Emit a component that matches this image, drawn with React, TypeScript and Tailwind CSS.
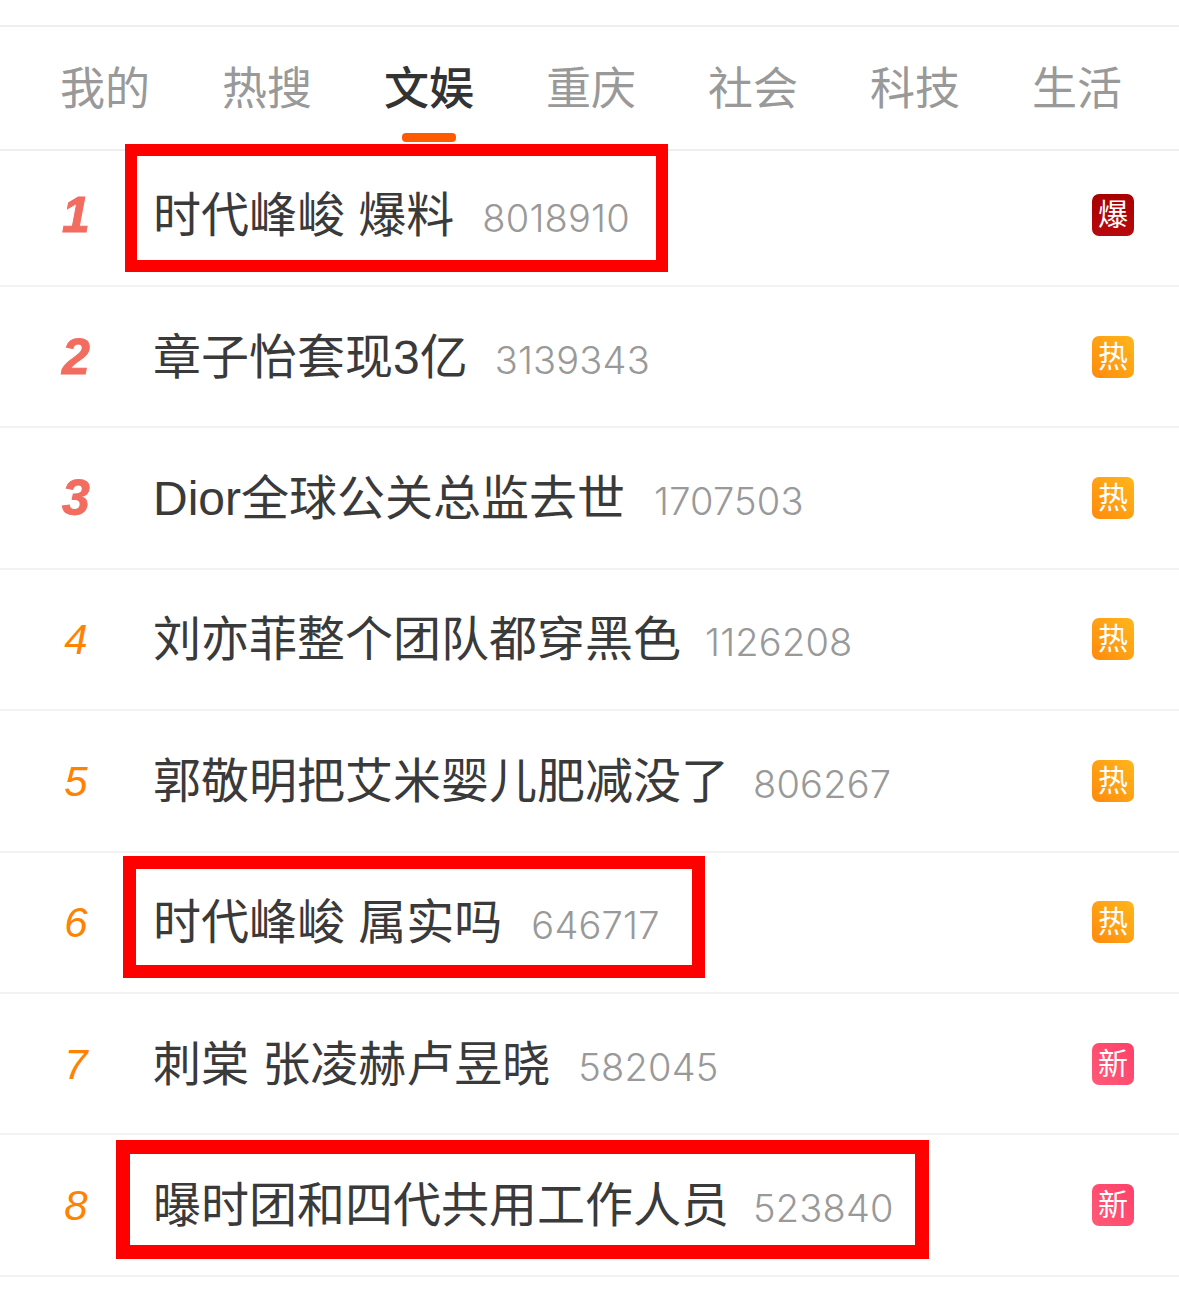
const tabs = ['我的', '热搜', '文娱', '重庆', '社会', '科技', '生活'];

const badgeStyles = {
  bao: 'bg-gradient-to-b from-[#a80000] to-[#b80a0e]',
  hot: 'bg-gradient-to-tr from-[#ff8a0c] to-[#ffb61c]',
  fresh: 'bg-gradient-to-tr from-[#ff5a78] to-[#ff3f68]',
};

const rows = [
  { rank: 1, title: '时代峰峻 爆料', count: '8018910', badge: '爆', tone: 'bao', height: 'h-[136px] pb-[6px]', gap: 'ml-[28px]', box: 'left-[125px] top-[-7px] h-[128px] w-[543px] border-[12px]' },
  { rank: 2, title: '章子怡套现3亿', count: '3139343', badge: '热', tone: 'hot', height: 'h-[141.4px]', gap: 'ml-[27px]', box: '' },
  { rank: 3, title: 'Dior全球公关总监去世', count: '1707503', badge: '热', tone: 'hot', height: 'h-[141.4px]', gap: 'ml-[29px]', box: '' },
  { rank: 4, title: '刘亦菲整个团队都穿黑色', count: '1126208', badge: '热', tone: 'hot', height: 'h-[141.4px]', gap: 'ml-[24px]', box: '' },
  { rank: 5, title: '郭敬明把艾米婴儿肥减没了', count: '806267', badge: '热', tone: 'hot', height: 'h-[141.4px]', gap: 'ml-[24px]', box: '' },
  { rank: 6, title: '时代峰峻 属实吗', count: '646717', badge: '热', tone: 'hot', height: 'h-[141.4px]', gap: 'ml-[29px]', box: 'left-[123px] top-[3px] h-[122px] w-[582px] border-[13px]' },
  { rank: 7, title: '刺棠 张凌赫卢昱晓', count: '582045', badge: '新', tone: 'fresh', height: 'h-[141.4px]', gap: 'ml-[28px]', box: '' },
  { rank: 8, title: '曝时团和四代共用工作人员', count: '523840', badge: '新', tone: 'fresh', height: 'h-[141.4px]', gap: 'ml-[24px]', box: 'left-[116px] top-[5px] h-[119px] w-[813px] border-[14px]' },
] as const;

function Tabs() {
  return (
    <nav className="mt-[25px] flex h-[126px] items-center gap-[72px] border-y-2 border-[#eeeeee] pl-[60px] pt-[4px]">
      {tabs.map((tab) => (
        <div key={tab} className="relative">
          <span className={`whitespace-nowrap text-[45px] leading-[60px] ${tab === '文娱' ? 'font-medium text-[#333333]' : 'text-[#999999]'}`}>
            {tab}
          </span>
          {tab === '文娱' && (
            <span className="absolute left-[18px] top-[73px] h-[9px] w-[54px] rounded-[4px] bg-[#ff5a00]" />
          )}
        </div>
      ))}
    </nav>
  );
}

function Row({ row }: { row: (typeof rows)[number] }) {
  const top = row.rank <= 3;
  return (
    <div className={`relative flex items-center border-b-2 border-[#f2f2f2] pl-[54px] pr-[45px] ${row.height}`}>
      <span
        className={`w-[44px] text-center font-['Liberation_Sans',sans-serif] italic leading-none ${top ? 'text-[50px] font-bold text-[#f26c60] [-webkit-text-stroke:1px_#f26c60]' : 'mt-[2px] text-[42px] text-[#ff8200]'}`}
      >
        {row.rank}
      </span>
      <span className="ml-[55px] mt-[2px] whitespace-nowrap text-[48px] leading-[64px] text-[#3a3a3a]">{row.title}</span>
      <span className={`mt-[6px] font-['Inter',sans-serif] text-[38px] font-light leading-none tracking-[0.2px] text-[#999999] ${row.gap}`}>{row.count}</span>
      <span
        className={`ml-auto flex h-[42px] w-[42px] items-center justify-center rounded-[7px] text-[30px] leading-none text-white ${badgeStyles[row.tone]}`}
      >
        {row.badge}
      </span>
      {row.box && <div className={`absolute border-[#ff0000] ${row.box}`} />}
    </div>
  );
}

export default function App() {
  return (
    <div className="h-[1290px] w-[1179px] overflow-hidden bg-white font-['Liberation_Sans','Noto_Sans_CJK_SC',sans-serif]">
      <Tabs />
      {rows.map((row) => (
        <Row key={row.rank} row={row} />
      ))}
    </div>
  );
}
